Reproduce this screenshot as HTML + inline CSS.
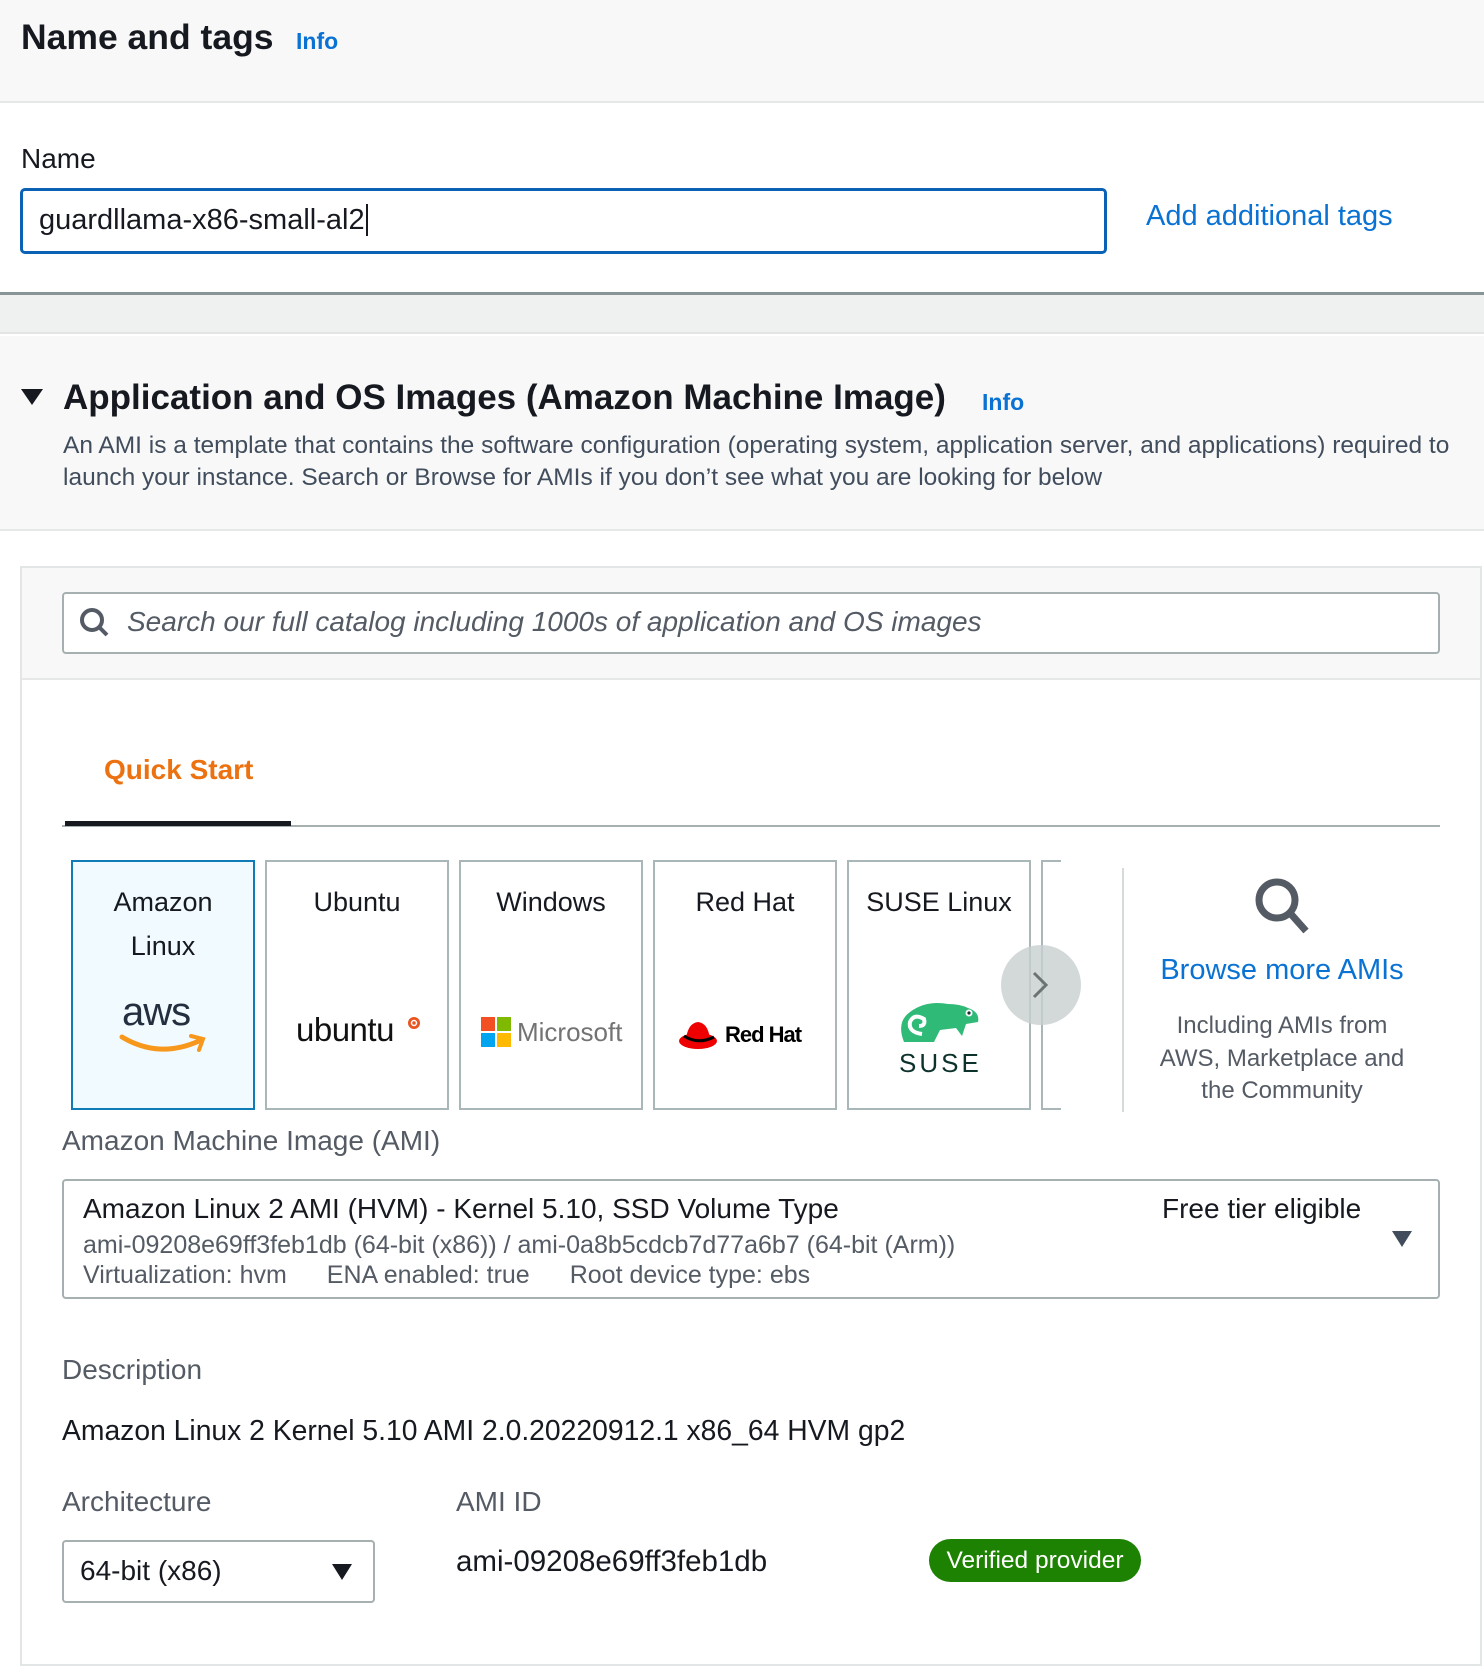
<!DOCTYPE html>
<html><head><meta charset="utf-8">
<style>
*{margin:0;padding:0;box-sizing:border-box}
body{width:1484px;height:1644px;position:relative;overflow:hidden;background:#fff;font-family:"Liberation Sans","DejaVu Sans",sans-serif;color:#16191f}
.a{position:absolute;white-space:nowrap}
.tile{position:absolute;top:860px;width:184px;height:250px;border:2px solid #aab7b8;background:#fff;text-align:center;font-size:27px;line-height:44px;padding-top:18px}
.link{color:#0972d3}
.gray{color:#545b64}
</style></head><body>
<div class="a" style="left:0;top:0;width:1484px;height:103px;background:#f8f8f8;border-bottom:2px solid #e6e8e8"></div>
<div class="a" style="left:21px;top:17px;font-size:35.5px;font-weight:bold">Name and tags</div>
<div class="a link" style="left:296px;top:28px;font-size:23px;font-weight:bold">Info</div>
<div class="a" style="left:21px;top:143px;font-size:28px">Name</div>
<div class="a" style="left:20px;top:188px;width:1087px;height:66px;border:3px solid #0b62b5;border-radius:5px"></div>
<div class="a" style="left:39px;top:204px;font-size:29px">guardllama-x86-small-al2<span style="border-left:2px solid #16191f;margin-left:1px"></span></div>
<div class="a link" style="left:1146px;top:200px;font-size:29px">Add additional tags</div>
<div class="a" style="left:0;top:292px;width:1484px;height:3px;background:#879596"></div>
<div class="a" style="left:0;top:295px;width:1484px;height:39px;background:#eff0f0;border-bottom:2px solid #e3e5e5"></div>
<div class="a" style="left:0;top:336px;width:1484px;height:195px;background:#f8f8f8;border-bottom:2px solid #e6e8e8"></div>
<svg class="a" style="left:21px;top:389px" width="22" height="16"><polygon points="0,0 22,0 11,16" fill="#16191f"/></svg>
<div class="a" style="left:63px;top:378px;font-size:35px;font-weight:bold">Application and OS Images (Amazon Machine Image)</div>
<div class="a link" style="left:982px;top:389px;font-size:23px;font-weight:bold">Info</div>
<div class="a" style="left:63px;top:430px;font-size:24.5px;color:#414d5c;line-height:32px">An AMI is a template that contains the software configuration (operating system, application server, and applications) required to<br>launch your instance. Search or Browse for AMIs if you don’t see what you are looking for below</div>
<!-- panel -->
<div class="a" style="left:20px;top:566px;width:1462px;height:1100px;border:2px solid #e3e6e6"></div>
<div class="a" style="left:22px;top:568px;width:1458px;height:112px;background:#f8f8f8;border-bottom:2px solid #e6e8e8"></div>
<div class="a" style="left:62px;top:592px;width:1378px;height:62px;border:2px solid #a6b0b1;border-radius:4px;background:#fff"></div>
<svg class="a" style="left:79px;top:607px" width="32" height="32"><circle cx="13" cy="13" r="10" fill="none" stroke="#545b64" stroke-width="4"/><line x1="20" y1="20" x2="28" y2="28" stroke="#545b64" stroke-width="4"/></svg>
<div class="a gray" style="left:127px;top:606px;font-size:28px;font-style:italic">Search our full catalog including 1000s of application and OS images</div>
<div class="a" style="left:104px;top:754px;font-size:28px;font-weight:bold;color:#ec7211">Quick Start</div>
<div class="a" style="left:62px;top:825px;width:1378px;height:2px;background:#a6b0b1"></div>
<div class="a" style="left:65px;top:821px;width:226px;height:5px;background:#16191f"></div>
<div class="tile" style="left:71px;background:#f1faff;border-color:#0f7cb8">Amazon<br>Linux</div>
<div class="tile" style="left:265px">Ubuntu</div>
<div class="tile" style="left:459px">Windows</div>
<div class="tile" style="left:653px">Red Hat</div>
<div class="tile" style="left:847px">SUSE Linux</div>
<div class="a" style="left:1041px;top:860px;width:20px;height:250px;border:2px solid #aab7b8;border-right:none"></div>
<!-- logos -->
<div class="a" style="left:122px;top:990px;font-size:40px;letter-spacing:-1px;color:#232f3e">aws</div>
<svg class="a" style="left:119px;top:1033px" width="88" height="24"><path d="M3 4 Q40 26 80 8" fill="none" stroke="#f7981d" stroke-width="5" stroke-linecap="round"/><path d="M72 3 L84 6 L80 17" fill="none" stroke="#f7981d" stroke-width="4" stroke-linecap="round"/></svg>
<div class="a" style="left:296px;top:1011px;font-size:33px;letter-spacing:-0.5px;color:#111">ubuntu</div>
<svg class="a" style="left:407px;top:1016px" width="14" height="14"><circle cx="7" cy="7" r="6" fill="#e95420"/><circle cx="7" cy="7" r="2.5" fill="none" stroke="#fff" stroke-width="1.5"/></svg>
<svg class="a" style="left:481px;top:1017px" width="30" height="30"><rect x="0" y="0" width="14" height="14" fill="#f25022"/><rect x="16" y="0" width="14" height="14" fill="#7fba00"/><rect x="0" y="16" width="14" height="14" fill="#00a4ef"/><rect x="16" y="16" width="14" height="14" fill="#ffb900"/></svg>
<div class="a" style="left:517px;top:1017px;font-size:26px;color:#737373">Microsoft</div>
<svg class="a" style="left:678px;top:1019px" width="44" height="32"><ellipse cx="20" cy="22" rx="19" ry="8" fill="#e00"/><path d="M8 20 Q10 4 20 3 Q30 4 32 20 Z" fill="#e00"/><path d="M6 17 Q20 26 36 18" fill="none" stroke="#000" stroke-width="3"/></svg>
<div class="a" style="left:725px;top:1022px;font-size:22px;font-weight:bold;letter-spacing:-1px;color:#000">Red Hat</div>
<svg class="a" style="left:898px;top:998px" width="84" height="48"><path d="M6 44 Q-2 24 12 14 Q28 2 50 6 Q62 6 70 10 Q82 14 80 24 L68 26 L64 38 L58 30 L42 32 L36 44 Z" fill="#30ba78"/><path d="M24 36 Q10 34 12 24 Q16 15 26 21 Q28 28 21 28" fill="none" stroke="#fff" stroke-width="4"/><circle cx="71" cy="15" r="3.5" fill="#fff"/><circle cx="71" cy="15" r="1.6" fill="#0c322c"/></svg>
<div class="a" style="left:899px;top:1048px;font-size:26px;letter-spacing:3px;color:#0c322c">SUSE</div>
<div class="a" style="left:1001px;top:945px;width:80px;height:80px;border-radius:50%;background:rgba(200,208,208,0.8)"></div>
<svg class="a" style="left:1030px;top:970px" width="20" height="30"><path d="M4 3 L16 15 L4 27" fill="none" stroke="#6b7373" stroke-width="3"/></svg>
<div class="a" style="left:1122px;top:868px;width:2px;height:244px;background:#d5dbdb"></div>
<svg class="a" style="left:1252px;top:875px" width="62" height="62"><circle cx="25" cy="25" r="18" fill="none" stroke="#545b64" stroke-width="7"/><line x1="38" y1="38" x2="54" y2="56" stroke="#545b64" stroke-width="7"/></svg>
<div class="a link" style="left:1122px;top:954px;width:320px;text-align:center;font-size:29px">Browse more AMIs</div>
<div class="a gray" style="left:1122px;top:1010px;width:320px;text-align:center;font-size:24px;line-height:32.5px;white-space:normal">Including AMIs from<br>AWS, Marketplace and<br>the Community</div>
<div class="a gray" style="left:62px;top:1125px;font-size:28px">Amazon Machine Image (AMI)</div>
<div class="a" style="left:62px;top:1179px;width:1378px;height:120px;border:2px solid #a6b0b1;border-radius:4px"></div>
<div class="a" style="left:83px;top:1193px;font-size:28px">Amazon Linux 2 AMI (HVM) - Kernel 5.10, SSD Volume Type</div>
<div class="a" style="left:1162px;top:1193px;font-size:28px">Free tier eligible</div>
<div class="a gray" style="left:83px;top:1231px;font-size:25px">ami-09208e69ff3feb1db (64-bit (x86)) / ami-0a8b5cdcb7d77a6b7 (64-bit (Arm))</div>
<div class="a gray" style="left:83px;top:1261px;font-size:25px">Virtualization: hvm<span style="margin-left:40px">ENA enabled: true</span><span style="margin-left:40px">Root device type: ebs</span></div>
<svg class="a" style="left:1392px;top:1231px" width="20" height="16"><polygon points="0,0 20,0 10,16" fill="#414d5c"/></svg>
<div class="a gray" style="left:62px;top:1354px;font-size:28px">Description</div>
<div class="a" style="left:62px;top:1414px;font-size:28.3px">Amazon Linux 2 Kernel 5.10 AMI 2.0.20220912.1 x86_64 HVM gp2</div>
<div class="a gray" style="left:62px;top:1486px;font-size:28px">Architecture</div>
<div class="a gray" style="left:456px;top:1486px;font-size:28px">AMI ID</div>
<div class="a" style="left:62px;top:1540px;width:313px;height:63px;border:2px solid #a6b0b1;border-radius:4px"></div>
<div class="a" style="left:80px;top:1555px;font-size:28px">64-bit (x86)</div>
<svg class="a" style="left:332px;top:1564px" width="20" height="16"><polygon points="0,0 20,0 10,16" fill="#16191f"/></svg>
<div class="a" style="left:456px;top:1545px;font-size:29.5px">ami-09208e69ff3feb1db</div>
<div class="a" style="left:929px;top:1539px;width:212px;height:43px;border-radius:22px;background:#1d8102;color:#fff;font-size:24.5px;text-align:center;line-height:43px">Verified provider</div>
</body></html>
